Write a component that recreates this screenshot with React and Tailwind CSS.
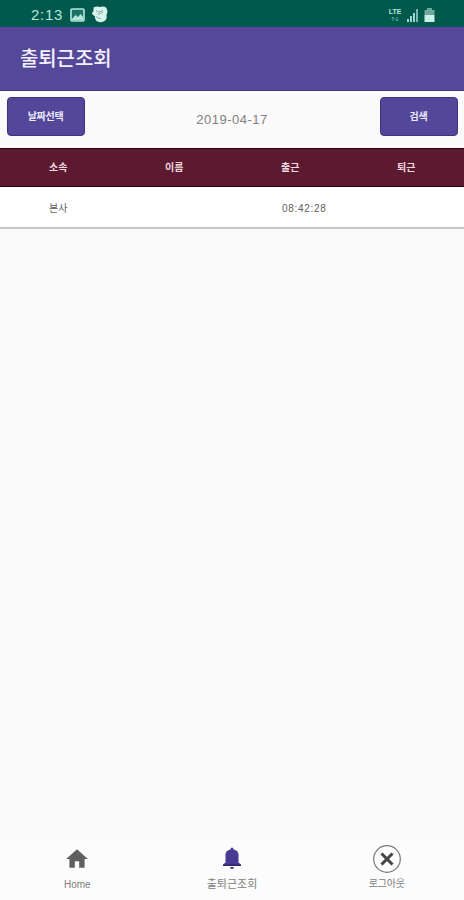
import React from "react";

const columns = ["소속", "이름", "출근", "퇴근"];
const row = ["본사", "", "08:42:28", ""];

function StatusBar() {
  return (
    <div className="flex h-[27px] items-center justify-between bg-[#00594c] pl-[31px] pr-[29px] pt-[2px] text-[#b5e6dc]">
      <div className="flex items-center">
        <span className="w-[39px] whitespace-nowrap text-[15px] leading-none tracking-[0.7px]">2:13</span>
        <svg width="15" height="14" viewBox="0 0 15 14">
          <rect x="1" y="1" width="13" height="12" rx="1" fill="#1b7266" stroke="#b5e6dc" strokeWidth="1.6" />
          <path d="M2 11l3.500-4 2.500 2 2.500-3L13 9v3H2z" fill="#b5e6dc" />
        </svg>
        <svg className="ml-[7px]" width="16" height="17" viewBox="0 0 16 17">
          <path d="M1.500 1.500Q5 0 8 1q4-1 6 .5Q16.500 5 14.500 9q1 5-3 6.500-4 1.500-7-.5-2-2-1.500-5Q0 9 0 6.500 2 6 1.500 1.500z" fill="#d9f3ed" />
          <path d="M4 4.500q3 3 7-.5M6 8.500l5-2.500M4 10.500q2 2.500 5 2" fill="none" stroke="#7fb0a6" strokeWidth="1" />
        </svg>
      </div>
      <div className="flex items-center">
        <div className="flex w-[14px] flex-col items-center">
          <span className="text-[7px] font-bold leading-[8px]">LTE</span>
          <svg width="10" height="6" viewBox="0 0 10 6">
            <path d="M3 5V1M1.500 2.500L3 1l1.500 1.500M7 1v4M5.500 3.500L7 5l1.500-1.500" fill="none" stroke="#5fa196" strokeWidth="1" />
          </svg>
        </div>
        <svg className="ml-[4px]" width="13" height="14" viewBox="0 0 13 14">
          <path d="M1 14v-3h2v3zM4 14V8h2v6zM7 14V5h2v9z" fill="#9fd8cd" />
          <path d="M10 14V1h2v13z" fill="#77b8ab" />
        </svg>
        <svg className="ml-[5px]" width="11" height="14" viewBox="0 0 11 14">
          <path d="M3 0h5v2h2.500v5H.5V2H3z" fill="#6aa99c" />
          <path d="M.5 7h10v7H.5z" fill="#c9f0e8" />
        </svg>
      </div>
    </div>
  );
}

function ActionButton({ children }) {
  return (
    <button className="flex h-[39px] w-[78px] items-center justify-center rounded-[4px] border border-[#3f3285] bg-[#54479a] text-[10px] font-bold tracking-[-0.3px] text-[#eeeafd]">
      {children}
    </button>
  );
}

function NavItem({ label, children, labelClass }) {
  return (
    <div className="flex flex-1 flex-col items-center">
      <div className="flex h-[30px] items-center justify-center">{children}</div>
      <span className={"mt-[3px] whitespace-nowrap leading-[14px] " + labelClass}>{label}</span>
    </div>
  );
}

export default function App() {
  return (
    <div className="flex h-[900px] w-[464px] flex-col overflow-hidden bg-[#fafafa] font-['Liberation_Sans','Noto_Sans_CJK_KR',sans-serif]">
      <StatusBar />
      <header className="flex h-[64px] items-center border-b border-[#43377f] bg-[#554899] pl-[20px] text-[20px] font-medium tracking-[-0.1px] text-[#f3f0fd]">
        출퇴근조회
      </header>
      <div className="flex h-[57px] items-start justify-between px-[6.5px] pt-[6px]">
        <ActionButton>날짜선택</ActionButton>
        <span className="mt-[14px] text-[13px] leading-[18px] tracking-[0.5px] text-[#808080]">2019-04-17</span>
        <ActionButton>검색</ActionButton>
      </div>
      <div className="grid h-[39px] grid-cols-4 items-center border-y border-[#32000f] bg-[#5c1a30] text-[10px] font-bold text-[#efd9df]">
        {columns.map((name) => (
          <span key={name} className="pl-[49px]">{name}</span>
        ))}
      </div>
      <div className="grid h-[42px] grid-cols-4 items-center border-b-2 border-[#c5c5c5] bg-white text-[10px] text-[#606060]">
        {row.map((value, i) => (
          <span key={i} className={"whitespace-nowrap pt-[2px] " + (i === 2 ? "pl-[50px] tracking-[0.7px]" : "pl-[49px]")}>{value}</span>
        ))}
      </div>
      <main className="flex-1" />
      <nav className="flex h-[62px] border-t border-[#f7f7f7] bg-[#fcfcfc] pt-[5px] text-[#808080]">
        <NavItem label="Home" labelClass="pt-[1px] text-[10px]">
          <svg width="26" height="26" viewBox="0 0 24 24" fill="#606060">
            <path d="M10 20v-6h4v6h5v-8h3L12 3 2 12h3v8z" />
          </svg>
        </NavItem>
        <NavItem label="출퇴근조회" labelClass="text-[11px]">
          <svg className="mb-[3px]" width="20" height="22" viewBox="0 0 20 22">
            <path d="M8.500 2a1.500 1.500 0 0 1 3 0v.6C14.800 3.200 16.500 5 16.500 8v7.500l2.500 2V19H1v-1.500l2.500-2V8c0-3 1.700-4.800 5-5.400z" fill="#493b94" />
            <path d="M1 17.500h18V19H1z" fill="#30255f" />
            <path d="M8 20h4a2 2 0 0 1-4 0z" fill="#493b94" />
          </svg>
        </NavItem>
        <NavItem label="로그아웃" labelClass="text-[10px] tracking-[-0.2px]">
          <svg width="30" height="30" viewBox="0 0 30 30" fill="none">
            <circle cx="15" cy="15" r="13.300" stroke="#777777" strokeWidth="1.200" />
            <path d="M9.500 9.500l11 11M20.500 9.500l-11 11" stroke="#454545" strokeWidth="3" />
          </svg>
        </NavItem>
      </nav>
    </div>
  );
}
